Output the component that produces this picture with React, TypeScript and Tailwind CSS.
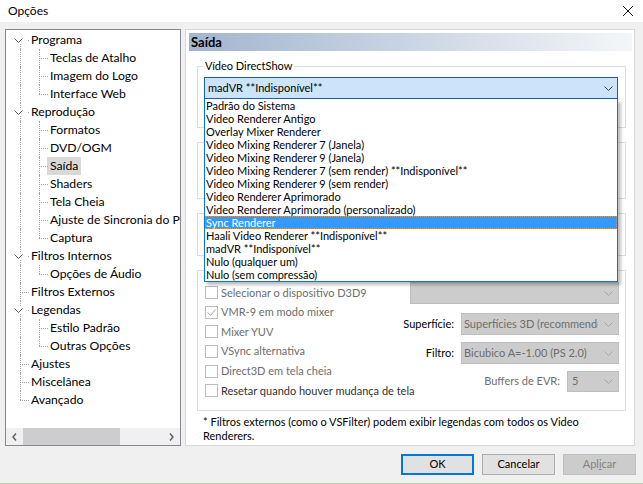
import React from 'react';

type TreeNode = { label: string; children?: string[] };

const tree: TreeNode[] = [
  { label: 'Programa', children: ['Teclas de Atalho', 'Imagem do Logo', 'Interface Web'] },
  {
    label: 'Reprodução',
    children: ['Formatos', 'DVD/OGM', 'Saída', 'Shaders', 'Tela Cheia', 'Ajuste de Sincronia do Player', 'Captura'],
  },
  { label: 'Filtros Internos', children: ['Opções de Áudio'] },
  { label: 'Filtros Externos' },
  { label: 'Legendas', children: ['Estilo Padrão', 'Outras Opções'] },
  { label: 'Ajustes' },
  { label: 'Miscelânea' },
  { label: 'Avançado' },
];

const renderers = [
  'Padrão do Sistema',
  'Video Renderer Antigo',
  'Overlay Mixer Renderer',
  'Video Mixing Renderer 7 (Janela)',
  'Video Mixing Renderer 9 (Janela)',
  'Video Mixing Renderer 7 (sem render) **Indisponível**',
  'Video Mixing Renderer 9 (sem render)',
  'Video Renderer Aprimorado',
  'Video Renderer Aprimorado (personalizado)',
  'Sync Renderer',
  'Haali Video Renderer **Indisponível**',
  'madVR **Indisponível**',
  'Nulo (qualquer um)',
  'Nulo (sem compressão)',
];

const dotV = 'absolute w-0 border-l border-dotted border-[#a0a0a0]';
const dotH = 'absolute h-0 border-t border-dotted border-[#a0a0a0]';

function Chevron({ className }: { className?: string }) {
  return (
    <svg width="9" height="5" viewBox="0 0 9 5" className={className}>
      <path d="M0.5 0.5 L4.5 4.5 L8.5 0.5" fill="none" stroke="currentColor" />
    </svg>
  );
}

function RootRow({ node, first, last }: { node: TreeNode; first: boolean; last: boolean }) {
  return (
    <div className="flex h-[18px] items-center">
      <div className="relative h-full w-[22px] shrink-0">
        {node.children ? (
          <>
            {!first && <div className={`${dotV} left-[14px] top-0 h-[5px]`} />}
            {!last && <div className={`${dotV} left-[14px] top-[13px] h-[5px]`} />}
            <Chevron className="absolute left-[8px] top-[7px] text-[#5a5a5a]" />
            <div className="absolute left-[22px] top-[9px] h-px w-px bg-[#a0a0a0]" />
          </>
        ) : (
          <>
            <div className={`${dotV} left-[14px] top-0 ${last ? 'h-[9px]' : 'h-full'}`} />
            <div className={`${dotH} left-[14px] top-[9px] w-[9px]`} />
          </>
        )}
      </div>
      <span className="whitespace-nowrap px-[3px] leading-[18px]">{node.label}</span>
    </div>
  );
}

function ChildRow({ label, lastChild, selected }: { label: string; lastChild: boolean; selected: boolean }) {
  return (
    <div className="flex h-[18px] items-center">
      <div className="relative h-full w-[22px] shrink-0">
        <div className={`${dotV} left-[14px] top-0 h-full`} />
      </div>
      <div className="relative h-full w-[19px] shrink-0">
        <div className={`${dotV} left-[11px] top-0 ${lastChild ? 'h-[9px]' : 'h-full'}`} />
        <div className={`${dotH} left-[11px] top-[9px] w-[9px]`} />
      </div>
      <span className={`whitespace-nowrap px-[3px] leading-[18px] ${selected ? 'bg-[#d9d9d9]' : ''}`}>{label}</span>
    </div>
  );
}

function TreePanel() {
  return (
    <div className="flex h-[417px] w-[176px] shrink-0 flex-col border border-[#828790] bg-white text-[12.2px]">
      <div className="flex-1 overflow-hidden pt-[1px]">
        {tree.map((node, i) => (
          <div key={node.label}>
            <RootRow node={node} first={i === 0} last={i === tree.length - 1} />
            {node.children?.map((c, j) => (
              <ChildRow key={c} label={c} lastChild={j === node.children!.length - 1} selected={c === 'Saída'} />
            ))}
          </div>
        ))}
      </div>
      <div className="flex h-[17px] shrink-0 items-stretch bg-[#f0f0f0]">
        <div className="flex w-[17px] items-center justify-center">
          <svg width="5" height="8" viewBox="0 0 5 8">
            <path d="M4 0.5 L1 4 L4 7.5" fill="none" stroke="#606060" strokeWidth="1.5" />
          </svg>
        </div>
        <div className="flex-1">
          <div className="h-full w-[97px] bg-[#cdcdcd]" />
        </div>
        <div className="flex w-[17px] items-center justify-center">
          <svg width="5" height="8" viewBox="0 0 5 8">
            <path d="M1 0.5 L4 4 L1 7.5" fill="none" stroke="#606060" strokeWidth="1.5" />
          </svg>
        </div>
      </div>
    </div>
  );
}

function CheckBox({ label, checked, dark }: { label: string; checked?: boolean; dark?: boolean }) {
  return (
    <div className="flex h-[19.6px] items-center">
      <div className="flex h-[13px] w-[13px] shrink-0 items-center justify-center border border-[#bcbcbc] bg-white">
        {checked && (
          <svg width="9" height="7" viewBox="0 0 9 7">
            <path d="M0.5 3.5 L3.5 6.3 L8.5 0.5" fill="none" stroke="#a8a8a8" />
          </svg>
        )}
      </div>
      <span className={`ml-[3px] whitespace-nowrap ${dark ? 'text-[#333333]' : 'text-[#6d6d6d]'}`}>{label}</span>
    </div>
  );
}

function DisabledCombo({ text, className }: { text?: string; className: string }) {
  return (
    <div className={`flex items-center border border-[#bfbfbf] bg-[#cccccc] text-[#6d6d6d] ${className}`}>
      <span className="flex-1 overflow-hidden whitespace-nowrap pl-[2px]">{text}</span>
      <div className="flex w-[20px] shrink-0 justify-center">
        <Chevron className="text-[#a6a6a6]" />
      </div>
    </div>
  );
}

function OutputPanel() {
  return (
    <div className="flex h-[417px] w-[450px] shrink-0 flex-col border border-[#d9d9d9] bg-white pl-[3px] pr-[2px] pt-[3px] text-[11px]">
      <div className="h-[18px] bg-gradient-to-r from-[#a2b5ce] to-[#f4f6f9] pl-[2px] text-[13px] font-bold leading-[18px]">
        Saída
      </div>

      <fieldset className="ml-[8px] mr-[6px] mt-[8px] border border-[#dcdcdc] pb-[28px] pl-[6px] pr-[7px]">
        <legend className="ml-[-1px] px-[2px] leading-[14px]">Vídeo DirectShow</legend>
        <div className="relative mt-[4px] h-[22px] w-[414px]">
          <div className="flex h-full items-center justify-between border border-[#1c5fa3] bg-[#cce4f7] pl-[3px] pr-[4px]">
            <span>madVR **Indisponível**</span>
            <Chevron className="text-[#404040]" />
          </div>
          <div className="absolute left-0 top-full z-10 w-full border border-t-0 border-[#0078d7] bg-white shadow-[3px_3px_3px_rgba(0,0,0,0.25)]">
            {renderers.map((r) => (
              <div
                key={r}
                className={`h-[13px] whitespace-nowrap border leading-[11px] ${
                  r === 'Sync Renderer'
                    ? 'border-dotted border-[#e6963c] bg-[#3399ff] text-white'
                    : 'border-transparent'
                }`}
              >
                {r}
              </div>
            ))}
          </div>
        </div>
      </fieldset>

      <div className="ml-[8px] mr-[6px] mt-[14px] h-[57px] border border-[#dcdcdc]" />
      <div className="ml-[8px] mr-[6px] mt-[14px] h-[43px] border border-[#dcdcdc]" />

      <div className="ml-[8px] mr-[6px] mt-[14px] flex h-[141px] border border-[#dcdcdc]">
        <div className="min-w-0 flex-1 pl-[7px] pt-[12px]">
          <CheckBox label="Selecionar o dispositivo D3D9" />
          <CheckBox label="VMR-9 em modo mixer" checked />
          <CheckBox label="Mixer YUV" />
          <CheckBox label="VSync alternativa" />
          <CheckBox label="Direct3D em tela cheia" />
          <CheckBox label="Resetar quando houver mudança de tela" dark />
        </div>
        <div className="flex w-[215px] shrink-0 flex-col items-end pr-[6px] pt-[11px]">
          <DisabledCombo className="h-[22px] w-[209px]" />
          <div className="mt-[9px] flex items-center gap-[7px]">
            <span>Superfície:</span>
            <DisabledCombo text="Superfícies 3D (recommended)" className="h-[22px] w-[158px]" />
          </div>
          <div className="mt-[7px] flex items-center gap-[7px]">
            <span>Filtro:</span>
            <DisabledCombo text="Bicubico A=-1.00 (PS 2.0)" className="h-[22px] w-[158px]" />
          </div>
          <div className="mt-[7px] flex items-center gap-[7px]">
            <span className="text-[#6d6d6d]">Buffers de EVR:</span>
            <DisabledCombo text="5" className="h-[21px] w-[52px] pl-[2px]" />
          </div>
        </div>
      </div>

      <div className="mt-[4px] pl-[14px] leading-[14px]">
        <div className="whitespace-nowrap">* Filtros externos (como o VSFilter) podem exibir legendas com todos os Video</div>
        <div>Renderers.</div>
      </div>
    </div>
  );
}

export default function App() {
  return (
    <div className="flex h-[484px] w-[643px] flex-col overflow-hidden bg-[#f0f0f0] font-['Lato',sans-serif] text-[12px] text-black">
      <div className="flex h-[22px] shrink-0 items-center justify-between bg-white pl-[8px] pr-[10px]">
        <span>Opções</span>
        <svg width="10" height="10" viewBox="0 0 10 10">
          <path d="M0 0 L10 10 M10 0 L0 10" stroke="#111" strokeWidth="1" />
        </svg>
      </div>

      <div className="flex gap-[4px] pl-[5px] pt-[7px]">
        <TreePanel />
        <OutputPanel />
      </div>

      <div className="mt-[8px] flex justify-end gap-[8px] pr-[7px] text-[11px]">
        <button className="h-[21px] w-[73px] border-2 border-[#0078d7] bg-[#e1e1e1]">OK</button>
        <button className="h-[21px] w-[73px] border border-[#adadad] bg-[#e1e1e1]">Cancelar</button>
        <button className="h-[21px] w-[73px] border border-[#bfbfbf] bg-[#cccccc] text-[#838383]">
          Apl<span className="underline">i</span>car
        </button>
      </div>

      <div className="mt-auto h-px bg-[#b4d68f]" />
    </div>
  );
}
